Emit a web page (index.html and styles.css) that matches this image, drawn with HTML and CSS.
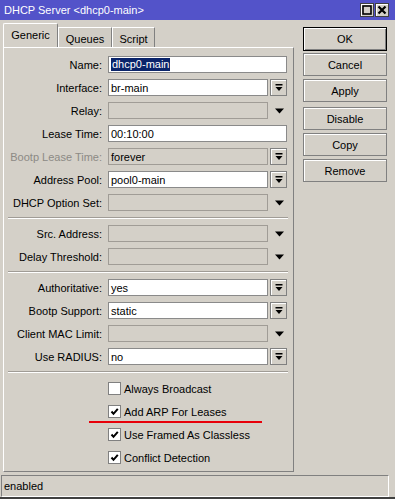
FILE: index.html
```html
<!DOCTYPE html>
<html lang="en">
<head>
    <meta charset="UTF-8">
    <meta name="viewport" content="width=device-width, initial-scale=1.0">
    <title>DHCP Server</title>
    <link rel="stylesheet" href="styles.css">
</head>
<body>
    <div id="window">
        <div id="titleBar">
            <div id="titleText">DHCP Server &lt;dhcp0-main&gt;</div>
            <div id="titleButtons">
                <div class="titleButton">
                    <svg width="10" height="10" viewBox="0 0 10 10"><rect x="1" y="1" width="8" height="8" fill="none" stroke="#000" stroke-width="1.6"/></svg>
                </div>
                <div class="titleButton">
                    <svg width="10" height="10" viewBox="0 0 10 10"><path d="M1.5 1.5 L8.5 8.5 M8.5 1.5 L1.5 8.5" stroke="#000" stroke-width="2.2"/></svg>
                </div>
            </div>
        </div>
        <div id="main">
            <div id="leftSide">
                <div id="tabs">
                    <div class="tab active">Generic</div>
                    <div class="tab queues">Queues</div>
                    <div class="tab script">Script</div>
                </div>
                <div id="panel">
                    <div class="row">
                        <div class="label">Name:</div>
                        <div class="field full"><span class="selected">dhcp0-main</span></div>
                    </div>
                    <div class="row">
                        <div class="label">Interface:</div>
                        <div class="field">br-main</div>
                        <div class="dropButton"><svg width="8" height="8" viewBox="0 0 8 8"><rect x="0.5" y="0" width="7" height="1.5" fill="#000"/><path d="M0.5 3 L7.5 3 L4 7 Z" fill="#000"/></svg></div>
                    </div>
                    <div class="row">
                        <div class="label">Relay:</div>
                        <div class="field disabled"></div>
                        <div class="dropArrow"><svg width="9" height="6" viewBox="0 0 9 6"><path d="M0 0.5 L9 0.5 L4.5 5.5 Z" fill="#000"/></svg></div>
                    </div>
                    <div class="row">
                        <div class="label">Lease Time:</div>
                        <div class="field full">00:10:00</div>
                    </div>
                    <div class="row">
                        <div class="label grey">Bootp Lease Time:</div>
                        <div class="field disabled">forever</div>
                        <div class="dropButton"><svg width="8" height="8" viewBox="0 0 8 8"><rect x="0.5" y="0" width="7" height="1.5" fill="#000"/><path d="M0.5 3 L7.5 3 L4 7 Z" fill="#000"/></svg></div>
                    </div>
                    <div class="row">
                        <div class="label">Address Pool:</div>
                        <div class="field">pool0-main</div>
                        <div class="dropButton"><svg width="8" height="8" viewBox="0 0 8 8"><rect x="0.5" y="0" width="7" height="1.5" fill="#000"/><path d="M0.5 3 L7.5 3 L4 7 Z" fill="#000"/></svg></div>
                    </div>
                    <div class="row">
                        <div class="label">DHCP Option Set:</div>
                        <div class="field disabled"></div>
                        <div class="dropArrow"><svg width="9" height="6" viewBox="0 0 9 6"><path d="M0 0.5 L9 0.5 L4.5 5.5 Z" fill="#000"/></svg></div>
                    </div>
                    <div class="separator"></div>
                    <div class="row">
                        <div class="label">Src. Address:</div>
                        <div class="field disabled"></div>
                        <div class="dropArrow"><svg width="9" height="6" viewBox="0 0 9 6"><path d="M0 0.5 L9 0.5 L4.5 5.5 Z" fill="#000"/></svg></div>
                    </div>
                    <div class="row">
                        <div class="label">Delay Threshold:</div>
                        <div class="field disabled"></div>
                        <div class="dropArrow"><svg width="9" height="6" viewBox="0 0 9 6"><path d="M0 0.5 L9 0.5 L4.5 5.5 Z" fill="#000"/></svg></div>
                    </div>
                    <div class="separator"></div>
                    <div class="row">
                        <div class="label">Authoritative:</div>
                        <div class="field">yes</div>
                        <div class="dropButton"><svg width="8" height="8" viewBox="0 0 8 8"><rect x="0.5" y="0" width="7" height="1.5" fill="#000"/><path d="M0.5 3 L7.5 3 L4 7 Z" fill="#000"/></svg></div>
                    </div>
                    <div class="row">
                        <div class="label">Bootp Support:</div>
                        <div class="field">static</div>
                        <div class="dropButton"><svg width="8" height="8" viewBox="0 0 8 8"><rect x="0.5" y="0" width="7" height="1.5" fill="#000"/><path d="M0.5 3 L7.5 3 L4 7 Z" fill="#000"/></svg></div>
                    </div>
                    <div class="row">
                        <div class="label">Client MAC Limit:</div>
                        <div class="field disabled"></div>
                        <div class="dropArrow"><svg width="9" height="6" viewBox="0 0 9 6"><path d="M0 0.5 L9 0.5 L4.5 5.5 Z" fill="#000"/></svg></div>
                    </div>
                    <div class="row">
                        <div class="label">Use RADIUS:</div>
                        <div class="field">no</div>
                        <div class="dropButton"><svg width="8" height="8" viewBox="0 0 8 8"><rect x="0.5" y="0" width="7" height="1.5" fill="#000"/><path d="M0.5 3 L7.5 3 L4 7 Z" fill="#000"/></svg></div>
                    </div>
                    <div class="separator last"></div>
                    <div class="checkRow">
                        <div class="checkBox"></div>
                        <div>Always Broadcast</div>
                    </div>
                    <div class="checkRow">
                        <div class="checkBox"><svg width="9" height="9" viewBox="0 0 9 9"><path d="M1.5 4.5 L3.5 6.8 L7.8 1.8" fill="none" stroke="#000" stroke-width="2"/></svg></div>
                        <div>Add ARP For Leases</div>
                    </div>
                    <div class="checkRow">
                        <div class="checkBox"><svg width="9" height="9" viewBox="0 0 9 9"><path d="M1.5 4.5 L3.5 6.8 L7.8 1.8" fill="none" stroke="#000" stroke-width="2"/></svg></div>
                        <div>Use Framed As Classless</div>
                    </div>
                    <div class="checkRow">
                        <div class="checkBox"><svg width="9" height="9" viewBox="0 0 9 9"><path d="M1.5 4.5 L3.5 6.8 L7.8 1.8" fill="none" stroke="#000" stroke-width="2"/></svg></div>
                        <div>Conflict Detection</div>
                    </div>
                    <div id="redLine"></div>
                </div>
            </div>
            <div id="buttons">
                <div class="button default">OK</div>
                <div class="button">Cancel</div>
                <div class="button">Apply</div>
                <div class="button spaced">Disable</div>
                <div class="button">Copy</div>
                <div class="button">Remove</div>
            </div>
        </div>
        <div id="statusBar">enabled</div>
    </div>
</body>
</html>
```

FILE: styles.css
```css
* {
    margin: 0;
    padding: 0;
    box-sizing: border-box;
}
body {
    background-color: #d4d0c8;
    color: black;
    font-family: 'Liberation Sans', Arial, sans-serif;
    font-size: 11px;
}
#window {
    width: 395px;
    height: 499px;
    border-bottom: 2px solid #404040;
}
#titleBar {
    height: 20px;
    background-color: #5353c9;
    color: white;
    display: flex;
    align-items: center;
    justify-content: space-between;
    padding-left: 4px;
    padding-right: 6px;
}
#titleButtons {
    display: flex;
    gap: 1px;
}
.titleButton {
    width: 14px;
    height: 14px;
    background-color: #d4d0c8;
    border: 1px solid #404040;
    box-shadow: inset 1px 1px #ffffff;
    display: flex;
    align-items: center;
    justify-content: center;
}
#main {
    display: flex;
    padding-top: 3px;
}
#leftSide {
    margin-left: 3px;
    width: 291px;
}
#tabs {
    display: flex;
    align-items: flex-end;
    height: 24px;
}
.tab {
    height: 20px;
    border: 1px solid white;
    border-right-color: #808080;
    border-bottom: none;
    display: flex;
    align-items: center;
    justify-content: center;
    background-color: #d0ccc4;
}
.tab.active {
    width: 55px;
    height: 25px;
    margin-bottom: -1px;
    position: relative;
    background-color: #d4d0c8;
    padding-bottom: 3px;
    border-radius: 2px 2px 0 0;
}
.tab.queues {
    width: 54px;
    padding-top: 2px;
}
.tab.script {
    width: 43px;
    padding-top: 2px;
}
#panel {
    position: relative;
    height: 425px;
    border: 1px solid white;
    border-right-color: #808080;
    border-bottom-color: #808080;
    padding-top: 8px;
}
.row {
    display: flex;
    align-items: center;
    height: 17px;
    margin-bottom: 6px;
}
.label {
    width: 98px;
    margin-right: 6px;
    text-align: right;
    white-space: nowrap;
}
.label.grey {
    color: #8c8a85;
}
.field {
    width: 160px;
    height: 17px;
    margin-right: 2px;
    background-color: white;
    border: 1px solid #8a8a8a;
    padding-left: 2px;
    display: flex;
    align-items: center;
    white-space: nowrap;
}
.field.full {
    width: 179px;
    margin-right: 0;
}
.field.disabled {
    background-color: #d4d0c8;
    border-color: #a09c96;
}
.selected {
    background-color: #0a246a;
    color: white;
    padding: 0 1px;
    line-height: 13px;
}
.dropButton {
    width: 17px;
    height: 17px;
    border: 1px solid #808080;
    box-shadow: inset 1px 1px #ffffff;
    display: flex;
    align-items: center;
    justify-content: center;
}
.dropArrow {
    width: 17px;
    height: 17px;
    display: flex;
    align-items: center;
    justify-content: center;
    padding-left: 1px;
}
.separator {
    margin: 0 5px 6px 4px;
    border-top: 1px solid #a09c96;
    border-bottom: 1px solid #ffffff;
}
.separator.last {
    margin-bottom: 7px;
}
.checkRow {
    display: flex;
    align-items: center;
    height: 17px;
    margin-bottom: 6px;
    padding-left: 104px;
}
.checkBox {
    width: 13px;
    height: 13px;
    margin-right: 3px;
    background-color: white;
    border: 1px solid #808080;
    display: flex;
    align-items: center;
    justify-content: center;
}
#redLine {
    position: absolute;
    left: 85px;
    top: 373px;
    width: 173px;
    height: 2px;
    background-color: #e8000a;
}
#buttons {
    margin-left: 9px;
    margin-top: 4px;
    width: 84px;
}
.button {
    height: 23px;
    margin-bottom: 3px;
    border: 1px solid #808080;
    box-shadow: inset 1px 1px #ffffff;
    display: flex;
    align-items: center;
    justify-content: center;
}
.button.default {
    height: 24px;
    margin-bottom: 2px;
    border: 1px solid #000000;
    box-shadow: inset 1px 1px #ffffff, inset -1px -1px #808080;
}
.button.spaced {
    margin-top: 5px;
}
#statusBar {
    margin: 3px 6px 0 1px;
    height: 22px;
    border: 1px solid #808080;
    border-right-color: white;
    border-bottom-color: white;
    padding-left: 2px;
    display: flex;
    align-items: center;
}
```
